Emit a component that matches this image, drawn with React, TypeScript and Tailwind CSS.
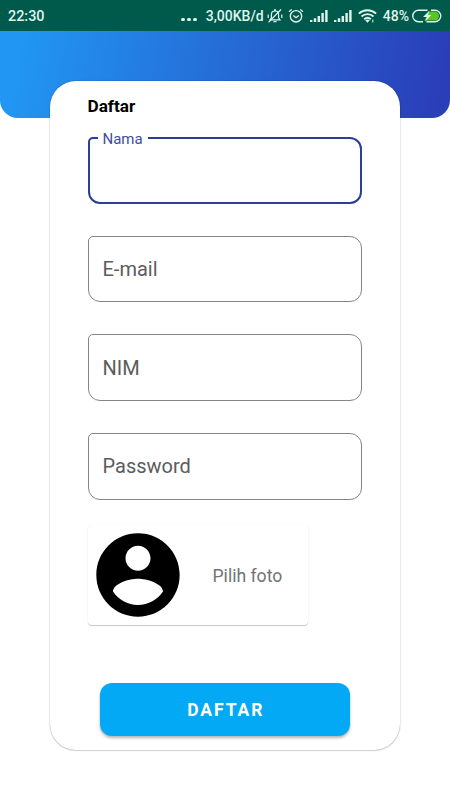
const fields = ["E-mail", "NIM", "Password"];

function BellOffIcon() {
  return (
    <svg className="h-4 w-4 shrink-0" viewBox="0 0 16 16" fill="none" stroke="currentColor" strokeWidth="1.2">
      <path d="M3 11.8h10l-1.400-2V6.500C11.600 4.500 10.200 3 8 3S4.400 4.500 4.400 6.500v3.300zM7 1.800h2M6.500 13.600h3" />
      <path d="M1.500 14.300 14 1.500M1.200 6.500v3.500M14.800 6.500V10" />
    </svg>
  );
}

function AlarmIcon() {
  return (
    <svg className="ml-[5px] h-4 w-4 shrink-0" viewBox="0 0 16 16" fill="none" stroke="currentColor" strokeWidth="1.3">
      <circle cx="8" cy="8.300" r="5.700" />
      <path d="m5.300 7.500 2.700 2.200 2.900-2.200M1 3.800 3.700 1.500M15 3.800l-2.700-2.300" />
    </svg>
  );
}

function SignalIcon() {
  return (
    <svg className="ml-[6px] h-3.5 w-[18px] shrink-0" viewBox="0 0 18 14" fill="currentColor">
      <path d="M0 11h2.400v2H0zM3.800 9.300h2.400V13H3.800zM7.600 7H10v6H7.600zM11.400 4h2.400v9h-2.400zM15.200 1h2.400v12h-2.400z" />
    </svg>
  );
}

function WifiIcon() {
  return (
    <svg className="ml-[6px] h-3.5 w-[19px] shrink-0" viewBox="0 0 19 14" fill="none" stroke="currentColor" strokeWidth="1.900">
      <path d="M.8 4.600c5-4.500 12.300-4.500 17.300 0M3.500 7.500c3.500-3.200 8.500-3.200 12 0M6.200 10.200c2-1.700 4.600-1.700 6.600 0" />
      <path d="m7.200 11.300 2.300 2.500 2.300-2.500c-1.400-1-3.200-1-4.600 0z" fill="currentColor" stroke="none" />
      <path d="M14.800 10.500v3" strokeWidth="1" />
    </svg>
  );
}

function BatteryIcon() {
  return (
    <svg className="ml-[3px] h-[14px] w-[30px] shrink-0" viewBox="0 0 30 14">
      <path d="M17 2.500h5.500a4.500 4.500 0 0 1 0 9H12.500z" fill="#5bc623" />
      <path
        d="M15.500 1.200H6.500a5.700 5.700 0 0 0 0 11.500H11M19 1.200h4a5.700 5.700 0 0 1 0 11.500H14.500"
        fill="none"
        stroke="currentColor"
        strokeWidth="1.400"
      />
      <path d="M17.500 1.500 11 8h4l-2 4.800L19.300 6H16z" fill="currentColor" />
    </svg>
  );
}

function StatusBar() {
  return (
    <div className="flex h-[31px] items-center bg-[#005a4c] pt-px pr-[8px] pl-2 text-[#dff5ef]">
      <span className="pt-px text-[14.400px] font-medium">22:30</span>
      <div className="ml-auto flex items-center">
        <div className="mt-[7px] mr-[9px] flex gap-[2.500px]">
          <span className="h-[3.500px] w-[3.500px] rounded-full bg-current" />
          <span className="h-[3.500px] w-[3.500px] rounded-full bg-current" />
          <span className="h-[3.500px] w-[3.500px] rounded-full bg-current" />
        </div>
        <span className="mr-[3px] text-[14px] font-medium">3,00KB/d</span>
        <BellOffIcon />
        <AlarmIcon />
        <SignalIcon />
        <SignalIcon />
        <WifiIcon />
        <span className="ml-[6px] text-[14px] font-medium">48%</span>
        <BatteryIcon />
      </div>
    </div>
  );
}

export default function App() {
  return (
    <div className="h-[800px] w-[450px] overflow-hidden bg-white font-[Roboto,sans-serif]">
      <StatusBar />
      <div className="h-[87px] rounded-b-[18px] bg-linear-[100deg,#2196f3_5%,#2a3eb8_97%]" />
      <div className="relative mx-auto -mt-[37px] h-[669px] w-[350px] rounded-[26px] bg-white pt-[15px] pr-[38px] pl-[37.500px] shadow-[0_0_1.500px_rgba(0,0,0,0.4),0_1px_1px_rgba(0,0,0,0.12)]">
        <h1 className="text-[17.200px] leading-5 font-bold text-black">Daftar</h1>

        <div className="relative mt-[21px] h-[66.500px] rounded-[12px] rounded-tl-[5px] border-2 border-[#2c3e96]">
          <label className="absolute -top-[9.500px] left-[8px] bg-white px-[5px] text-[15px] leading-[18px] text-[#3f4d9f]">
            Nama
          </label>
        </div>

        {fields.map((name) => (
          <div
            key={name}
            className="mt-[32.200px] flex h-[66.500px] items-center rounded-[12px] rounded-tl-[5px] border border-[#858585] pl-[14px] text-[20px] text-[#5c5c5c]"
          >
            {name}
          </div>
        ))}

        <div className="mt-[25px] flex h-[100px] w-[220px] items-center rounded-[4px] shadow-[0_1px_1px_rgba(0,0,0,0.22),0_0_2px_rgba(0,0,0,0.05)]">
          <svg className="h-[100px] w-[100px]" viewBox="0 0 24 24">
            <path d="M12 2C6.480 2 2 6.480 2 12s4.480 10 10 10 10-4.480 10-10S17.520 2 12 2zm0 3c1.660 0 3 1.340 3 3s-1.340 3-3 3-3-1.340-3-3 1.340-3 3-3zm0 14.200c-2.500 0-4.710-1.280-6-3.220.030-1.990 4-3.080 6-3.080 1.990 0 5.970 1.090 6 3.080-1.290 1.940-3.500 3.220-6 3.220z" />
          </svg>
          <span className="ml-[25px] pt-[3px] text-[17.600px] text-[#737373]">Pilih foto</span>
        </div>

        <button className="mx-auto mt-[58px] block h-[53px] w-[250px] rounded-[12px] bg-[#03a9f4] pt-[2px] pl-[2px] text-[17.500px] font-bold tracking-[1.900px] text-white shadow-[0_2px_3px_rgba(0,0,0,0.3)]">
          DAFTAR
        </button>
      </div>
    </div>
  );
}
